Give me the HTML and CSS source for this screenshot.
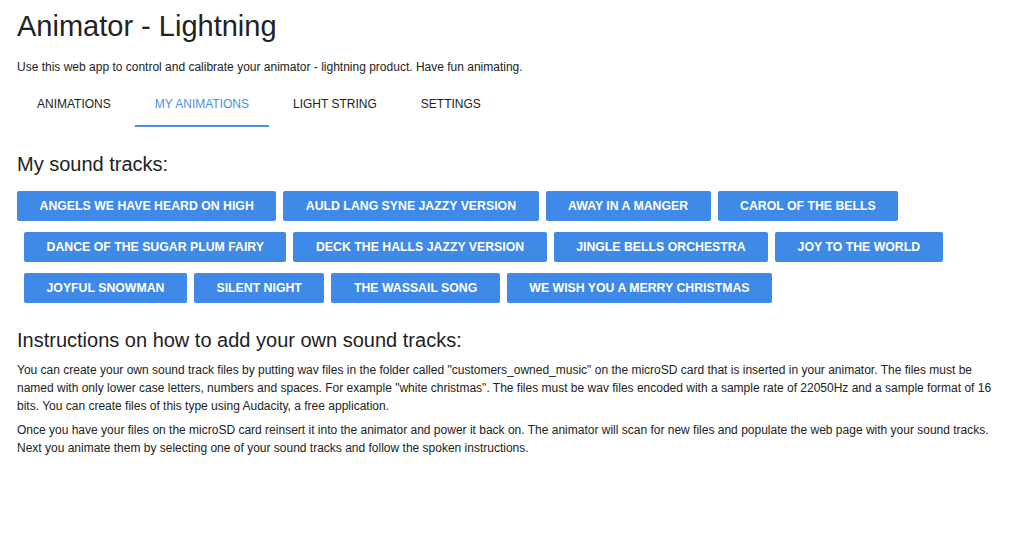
FILE: index.html
```html
<!DOCTYPE html>
<html lang="en">
<head>
<meta charset="utf-8">
<title>Animator - Lightning</title>
<link rel="stylesheet" href="styles.css">
</head>
<body>
<div class="page">
  <h1 class="title">Animator - Lightning</h1>
  <p class="lead">Use this web app to control and calibrate your animator - lightning product. Have fun animating.</p>
  <nav class="tabs">
    <a class="tab">ANIMATIONS</a>
    <a class="tab active">MY ANIMATIONS</a>
    <a class="tab">LIGHT STRING</a>
    <a class="tab">SETTINGS</a>
  </nav>
  <h2 class="section-title">My sound tracks:</h2>
  <div class="tracks">
    <button class="track">ANGELS WE HAVE HEARD ON HIGH</button>
    <button class="track">AULD LANG SYNE JAZZY VERSION</button>
    <button class="track">AWAY IN A MANGER</button>
    <button class="track">CAROL OF THE BELLS</button>
    <button class="track">DANCE OF THE SUGAR PLUM FAIRY</button>
    <button class="track">DECK THE HALLS JAZZY VERSION</button>
    <button class="track">JINGLE BELLS ORCHESTRA</button>
    <button class="track">JOY TO THE WORLD</button>
    <button class="track">JOYFUL SNOWMAN</button>
    <button class="track">SILENT NIGHT</button>
    <button class="track">THE WASSAIL SONG</button>
    <button class="track">WE WISH YOU A MERRY CHRISTMAS</button>
  </div>
  <h2 class="section-title instructions-title">Instructions on how to add your own sound tracks:</h2>
  <p class="body-text">You can create your own sound track files by putting wav files in the folder called "customers_owned_music" on the microSD card that is inserted in your animator. The files must be named with only lower case letters, numbers and spaces. For example "white christmas". The files must be wav files encoded with a sample rate of 22050Hz and a sample format of 16 bits. You can create files of this type using Audacity, a free application.</p>
  <p class="body-text">Once you have your files on the microSD card reinsert it into the animator and power it back on. The animator will scan for new files and populate the web page with your sound tracks. Next you animate them by selecting one of your sound tracks and follow the spoken instructions.</p>
</div>
</body>
</html>
```
FILE: styles.css
```css
* { box-sizing: border-box; }
html, body {
  margin: 0;
  padding: 0;
  background: #ffffff;
}
body {
  font-family: "Liberation Sans", Arial, Helvetica, sans-serif;
  color: #222222;
}
.page {
  padding: 0 17px;
}
.title {
  margin: 9px 0 0;
  font-size: 29px;
  line-height: 34px;
  font-weight: normal;
  color: #222222;
}
.lead {
  margin: 15px 0 0;
  font-size: 12px;
  line-height: 18px;
  color: #222222;
}
.tabs {
  display: flex;
  gap: 4px;
  margin-top: 7px;
}
.tab {
  display: flex;
  align-items: center;
  height: 44px;
  padding: 0 20px;
  font-size: 12px;
  color: #222222;
  border-bottom: 2px solid transparent;
  cursor: pointer;
}
.tab.active {
  color: #4a90e8;
  border-bottom-color: #4a90ea;
}
.section-title {
  margin: 25px 0 0;
  font-size: 20px;
  line-height: 24px;
  font-weight: normal;
  color: #222222;
}
.tracks {
  display: flex;
  flex-wrap: wrap;
  margin-top: 15px;
}
.track {
  height: 30px;
  margin: 0 0 11px 7px;
  padding: 0 22.5px;
  border: none;
  border-radius: 2px;
  background: #3f8ae8;
  color: #ffffff;
  font-family: "Liberation Sans", Arial, Helvetica, sans-serif;
  font-size: 12.3px;
  font-weight: bold;
  cursor: pointer;
}
.track:first-child {
  margin-left: 0;
}
.instructions-title {
  margin-top: 14px;
}
.body-text {
  margin: 9px 0 0;
  font-size: 12px;
  line-height: 18px;
  color: #222222;
}
.body-text + .body-text {
  margin-top: 6px;
}
```
